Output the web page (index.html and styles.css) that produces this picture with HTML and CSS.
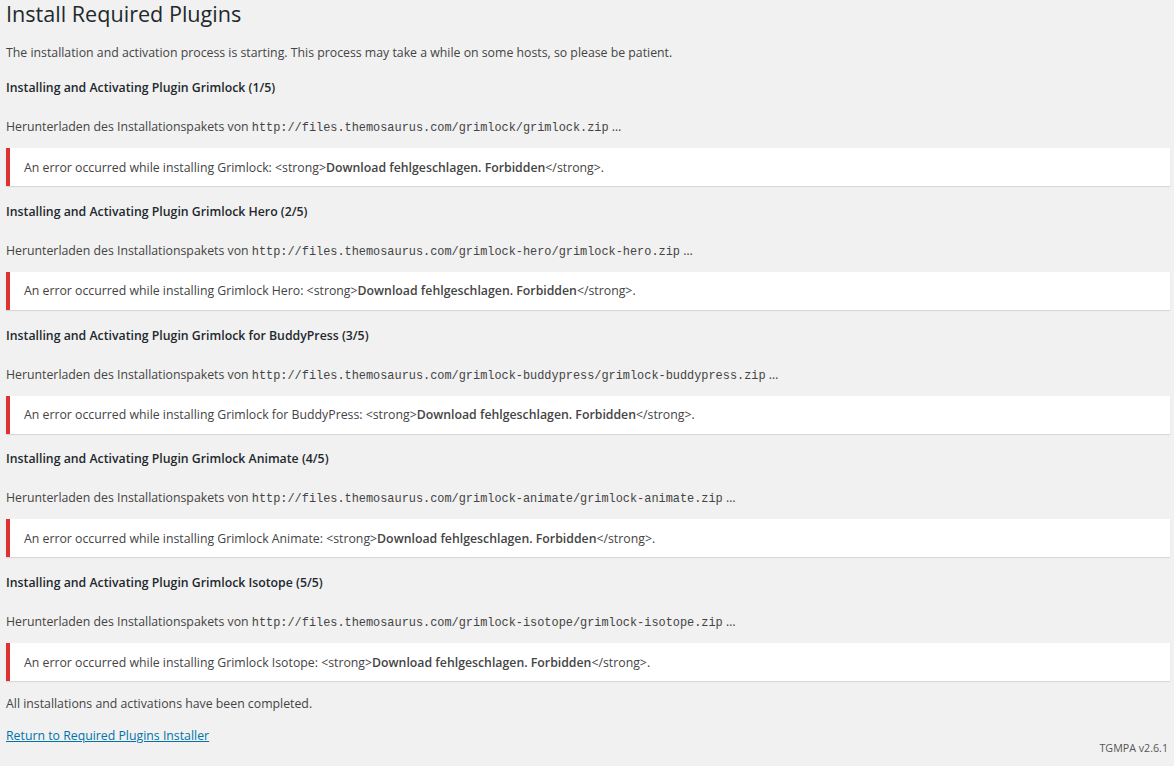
FILE: index.html
```
<!DOCTYPE html>
<html>
<head>
  <title>Install Required Plugins</title>
  <link rel="stylesheet" href="styles.css">
</head>
<body>
  <div class="wrap">
    <h1>Install Required Plugins</h1>
    <p class="intro">The installation and activation process is starting. This process may take a while on some hosts, so please be patient.</p>

    <div class="step">
      <h4>Installing and Activating Plugin Grimlock (1/5)</h4>
      <p>Herunterladen des Installationspakets von <code>http://files.themosaurus.com/grimlock/grimlock.zip</code> &hellip;</p>
      <div class="notice"><p>An error occurred while installing Grimlock: &lt;strong&gt;<strong>Download fehlgeschlagen. Forbidden</strong>&lt;/strong&gt;.</p></div>
    </div>

    <div class="step">
      <h4>Installing and Activating Plugin Grimlock Hero (2/5)</h4>
      <p>Herunterladen des Installationspakets von <code>http://files.themosaurus.com/grimlock-hero/grimlock-hero.zip</code> &hellip;</p>
      <div class="notice"><p>An error occurred while installing Grimlock Hero: &lt;strong&gt;<strong>Download fehlgeschlagen. Forbidden</strong>&lt;/strong&gt;.</p></div>
    </div>

    <div class="step">
      <h4>Installing and Activating Plugin Grimlock for BuddyPress (3/5)</h4>
      <p>Herunterladen des Installationspakets von <code>http://files.themosaurus.com/grimlock-buddypress/grimlock-buddypress.zip</code> &hellip;</p>
      <div class="notice"><p>An error occurred while installing Grimlock for BuddyPress: &lt;strong&gt;<strong>Download fehlgeschlagen. Forbidden</strong>&lt;/strong&gt;.</p></div>
    </div>

    <div class="step">
      <h4>Installing and Activating Plugin Grimlock Animate (4/5)</h4>
      <p>Herunterladen des Installationspakets von <code>http://files.themosaurus.com/grimlock-animate/grimlock-animate.zip</code> &hellip;</p>
      <div class="notice"><p>An error occurred while installing Grimlock Animate: &lt;strong&gt;<strong>Download fehlgeschlagen. Forbidden</strong>&lt;/strong&gt;.</p></div>
    </div>

    <div class="step">
      <h4>Installing and Activating Plugin Grimlock Isotope (5/5)</h4>
      <p>Herunterladen des Installationspakets von <code>http://files.themosaurus.com/grimlock-isotope/grimlock-isotope.zip</code> &hellip;</p>
      <div class="notice"><p>An error occurred while installing Grimlock Isotope: &lt;strong&gt;<strong>Download fehlgeschlagen. Forbidden</strong>&lt;/strong&gt;.</p></div>
    </div>

    <p class="done">All installations and activations have been completed.</p>

    <div class="bottom">
      <p><a href="#">Return to Required Plugins Installer</a></p>
      <div class="footer">TGMPA v2.6.1</div>
    </div>
  </div>
</body>
</html>
```

FILE: styles.css
```
body {
  margin: 0;
  background: #f1f1f1;
  color: #444;
  font-family: "Open Sans", "Noto Sans", sans-serif;
  font-size: 12.3px;
}

.wrap {
  padding: 0 4px 0 6px;
}

h1 {
  margin: 0;
  font-size: 21.6px;
  font-weight: 400;
  line-height: 28px;
  color: #23282d;
}

p {
  margin: 0;
  line-height: 19px;
}

.intro {
  margin-top: 15px;
}

/* one plugin = heading, download line, error box */
.step {
  margin-top: 16px;
}
.step + .step {
  margin-top: 15.8px;
}

h4 {
  margin: 0;
  font-size: 12.3px;
  font-weight: 600;
  line-height: 20px;
  color: #23282d;
}

.step > p {
  margin-top: 19px;
}

code {
  font-family: "Liberation Mono", monospace;
  font-size: 11.9px;
  line-height: 1;
  color: #444;
}

.notice {
  margin-top: 12px;
  background: #fff;
  border-left: 4px solid #dc3232;
  box-shadow: 0 1px 1px 0 rgba(0, 0, 0, 0.1);
  padding: 9.5px 14px;
}

.notice strong {
  font-weight: 600;
  color: #444;
}

.done {
  margin-top: 13px;
}

.bottom {
  display: flex;
  justify-content: space-between;
  align-items: flex-start;
  margin-top: 13px;
}

a {
  color: #0073aa;
}

.footer {
  padding-top: 13px;
  padding-right: 2px;
  font-size: 10.7px;
  line-height: 19px;
  color: #555;
}
```
